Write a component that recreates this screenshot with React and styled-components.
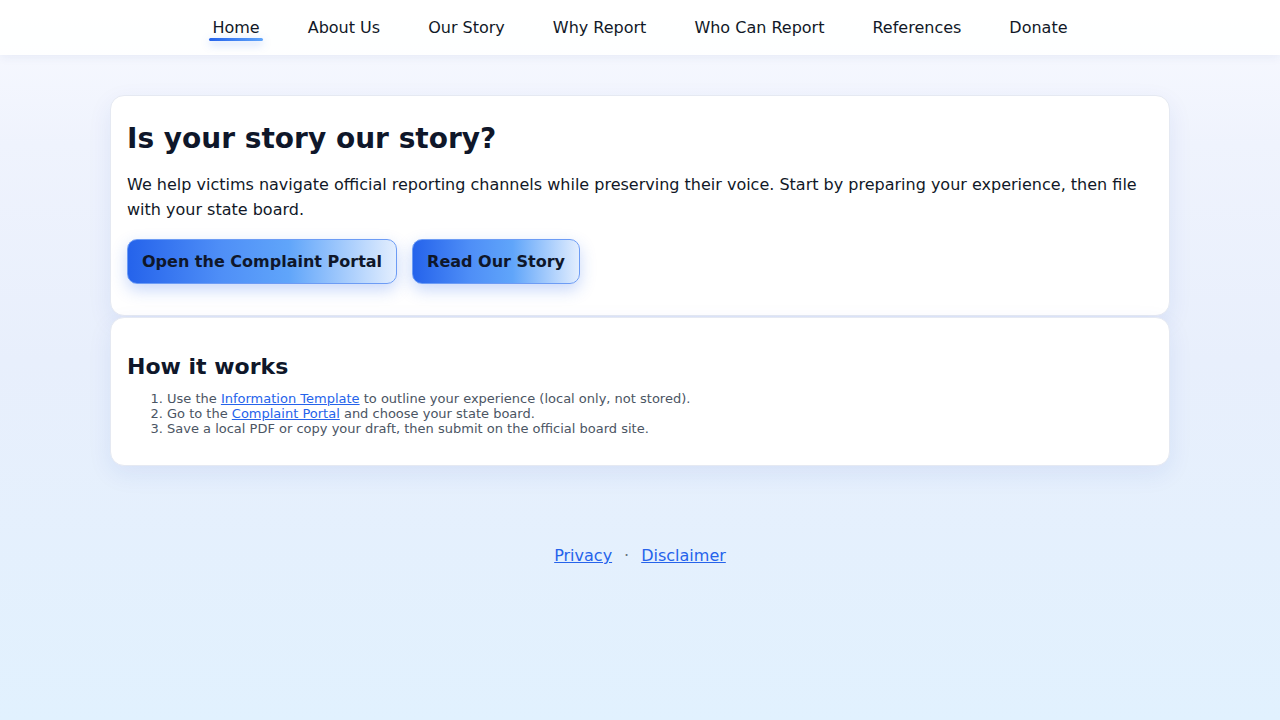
import React from 'react';
import styled, { createGlobalStyle } from 'styled-components';

const GlobalStyle = createGlobalStyle`
  html, body {
    margin: 0;
    padding: 0;
  }
  body {
    font-family: "DejaVu Sans", "Noto Sans", sans-serif;
    color: #0f172a;
    min-height: 100vh;
    background: linear-gradient(180deg, #f9faff 0%, #eff3fd 20%, #e8effc 50%, #e1f1fe 100%);
    background-attachment: fixed;
  }
`;

const Page = styled.div`
  min-height: 720px;
  display: flex;
  flex-direction: column;
`;

const NavBar = styled.nav`
  height: 55px;
  background: rgba(255, 255, 255, 0.88);
  box-shadow: 0 2px 10px rgba(30, 58, 138, 0.07);
  display: flex;
  justify-content: center;
  align-items: center;
  gap: 42px;
`;

const NavLink = styled.a`
  position: relative;
  font-size: 16px;
  color: #111827;
  text-decoration: none;
  padding: 0 3px;
  line-height: 19px;

  &::after {
    content: '';
    display: ${(p) => (p.$active ? 'block' : 'none')};
    position: absolute;
    left: 0;
    right: 0;
    bottom: -4px;
    height: 3px;
    border-radius: 2px;
    background: linear-gradient(90deg, #2563eb, #60a5fa);
    box-shadow: 0 3px 8px rgba(37, 99, 235, 0.35);
  }
`;

const Main = styled.main`
  width: 1060px;
  margin: 40px auto 0;
  display: flex;
  flex-direction: column;
  gap: 1px;
`;

const Card = styled.section`
  background: #fff;
  border: 1px solid #e5e9f2;
  border-radius: 14px;
  padding: 16px;
  box-shadow: 0 8px 24px rgba(30, 64, 175, 0.08);
`;

const Title = styled.h1`
  font-size: 28px;
  font-weight: 700;
  margin: 11px 0 0;
  color: #0f172a;
  line-height: 32px;
`;

const Lead = styled.p`
  font-size: 16px;
  line-height: 25px;
  margin: 17px 0 17px;
  color: #111827;
`;

const Actions = styled.div`
  display: flex;
  gap: 15px;
  margin-bottom: 15px;
`;

const Button = styled.a`
  display: inline-block;
  padding: 12px 14px;
  font-size: 16px;
  font-weight: 700;
  line-height: 19px;
  color: #0f172a;
  text-decoration: none;
  border: 1px solid #6d9cf5;
  border-radius: 10px;
  background: linear-gradient(90deg, #2563eb 0%, #4f8ff7 35%, #60a5fa 60%, #e3eefe 100%);
  box-shadow: 0 6px 16px rgba(37, 99, 235, 0.25);
`;

const SubTitle = styled.h2`
  font-size: 22px;
  font-weight: 700;
  margin: 20px 0 12px;
  color: #0f172a;
`;

const Steps = styled.ol`
  margin: 0 0 13px;
  padding-left: 40px;
  font-size: 13px;
  line-height: 15px;
  color: #4b5563;
`;

const InlineLink = styled.a`
  color: #2563eb;
  text-decoration: underline;
`;

const Footer = styled.footer`
  margin-top: 80px;
  text-align: center;
  font-size: 16px;
  color: #6b7280;
`;

const FooterLink = styled.a`
  color: #2563eb;
  text-decoration: underline;
`;

const Dot = styled.span`
  margin: 0 12px;
  color: #6b7280;
`;

const links = ['Home', 'About Us', 'Our Story', 'Why Report', 'Who Can Report', 'References', 'Donate'];

export default function App() {
  return (
    <Page>
      <GlobalStyle />
      <NavBar>
        {links.map((l, i) => (
          <NavLink key={l} href="#" $active={i === 0}>
            {l}
          </NavLink>
        ))}
      </NavBar>
      <Main>
        <Card>
          <Title>Is your story our story?</Title>
          <Lead>
            We help victims navigate official reporting channels while preserving their voice. Start by
            preparing your experience, then file with your state board.
          </Lead>
          <Actions>
            <Button href="#">Open the Complaint Portal</Button>
            <Button href="#">Read Our Story</Button>
          </Actions>
        </Card>
        <Card>
          <SubTitle>How it works</SubTitle>
          <Steps>
            <li>
              Use the <InlineLink href="#">Information Template</InlineLink> to outline your experience
              (local only, not stored).
            </li>
            <li>
              Go to the <InlineLink href="#">Complaint Portal</InlineLink> and choose your state board.
            </li>
            <li>Save a local PDF or copy your draft, then submit on the official board site.</li>
          </Steps>
        </Card>
      </Main>
      <Footer>
        <FooterLink href="#">Privacy</FooterLink>
        <Dot>·</Dot>
        <FooterLink href="#">Disclaimer</FooterLink>
      </Footer>
    </Page>
  );
}
